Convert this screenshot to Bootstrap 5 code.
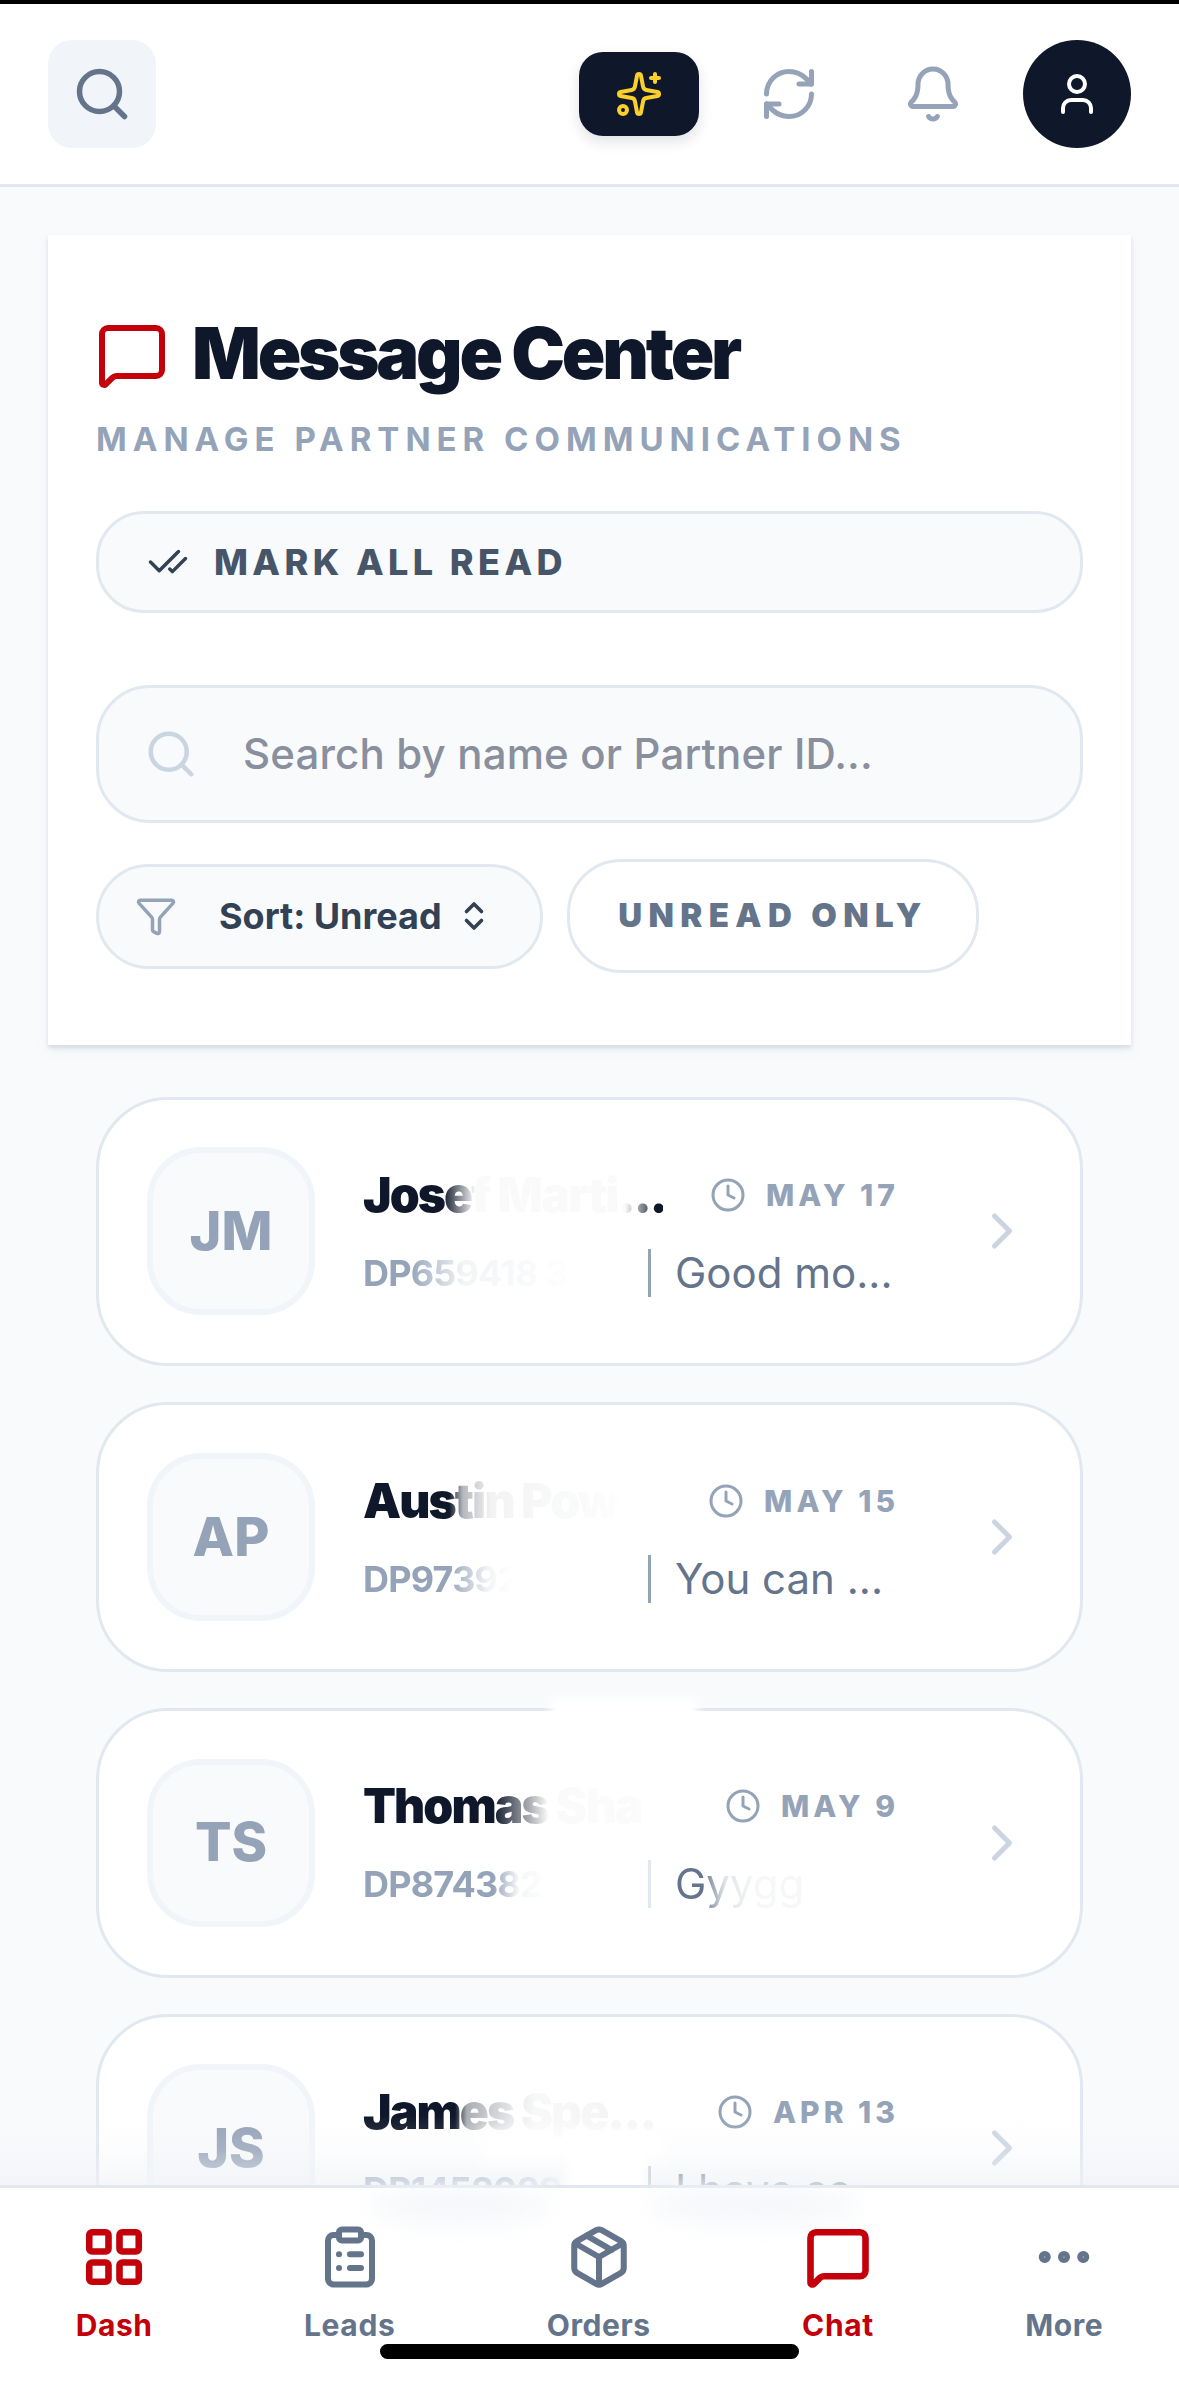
<!DOCTYPE html>
<html lang="en">
<head>
<meta charset="utf-8">
<title>Message Center</title>
<link href="https://cdn.jsdelivr.net/npm/bootstrap@5.3.0/dist/css/bootstrap.min.css" rel="stylesheet">
<style>
html,body{margin:0;height:2383px;overflow:hidden;background:#f8fafc;}
body{font-family:Inter,"Liberation Sans",sans-serif;color:#0f172a;}
.ico{fill:none;stroke:currentColor;stroke-width:2;stroke-linecap:round;stroke-linejoin:round;flex:none;display:block;}
.sw25{stroke-width:2.4;}
.sw22{stroke-width:2.2;}
.tred{color:#c4000a;}
.screen{height:2383px;border-top:4px solid #000;position:relative;}
.topbar{height:183px;background:#fff;border-bottom:3px solid #e2e8f0;padding:0 48px;flex:none;}
.tb-search{width:108px;height:108px;background:#f1f5f9;border-radius:24px;color:#64748b;border:0;padding:0;}
.tb-ai{width:120px;height:84px;background:#0f172a;border-radius:24px;color:#fcd02a;border:0;padding:0;box-shadow:0 6px 14px rgba(15,23,42,.12);}
.tb-plain{width:108px;height:108px;color:#94a3b8;border:0;padding:0;background:transparent;}
.tb-user{width:108px;height:108px;border-radius:50%;background:#0f172a;color:#fff;border:0;padding:0;}
.tb-tools{gap:36px;}
.content{flex:1 1 auto;min-height:0;overflow:hidden;position:relative;}
.panelwrap{padding:48px 48px 0;}
.panel{background:#fff;height:810px;margin:0;padding:82px 48px 0;box-shadow:0 3px 4px rgba(148,163,184,.3),0 6px 12px rgba(148,163,184,.08);}
.titleicon{margin-top:2px;}
.ptitle{font-size:72px;font-weight:900;letter-spacing:-3.2px;line-height:72px;margin:0;color:#0f172a;}
.psub{font-size:33px;font-weight:700;letter-spacing:6px;color:#94a3b8;line-height:40px;margin-top:28px;}
.markbtn{display:flex;align-items:center;gap:25px;width:100%;height:102px;margin-top:52px;padding:0 0 0 48px;background:#f8fafc;border:3px solid #e2e8f0;border-radius:48px;color:#475569;font-size:36px;font-weight:800;letter-spacing:4.4px;}
.markbtn .ico{color:#334155;}
.searchbox{height:138px;margin-top:72px;background:#f8fafc;border:3px solid #e2e8f0;border-radius:54px;padding:0 48px 0 45px;gap:45px;color:#cbd5e1;}
.searchbox input{flex:1;min-width:0;border:0;outline:0;background:transparent;font:500 42px/60px Inter,sans-serif;letter-spacing:.15px;padding:0;}
.searchbox input::placeholder{color:#898f9c;opacity:1;}
.sortpill{height:105px;width:447px;background:#f8fafc;border:3px solid #e2e8f0;border-radius:54px;padding:0 0 0 36px;color:#334155;font-size:36px;font-weight:700;}
.sortpill .fn{color:#94a3b8;margin-right:42px;}
.sortpill .ud{margin-left:14px;}
.unreadpill{height:114px;width:412px;background:#fff;border:3px solid #e2e8f0;border-radius:54px;color:#64748b;font-size:33px;font-weight:900;letter-spacing:6.4px;padding:0;}
.filters{gap:24px;margin-top:36px;}
.msgs{margin-top:51.67px;padding:0 96px;gap:36px;}
.msgcard{height:269.67px;flex:none;flex-direction:row;align-items:center;background:#fff;border:3px solid #e2e8f0;border-radius:72px;padding:0 48px;}
.avt{width:168px;height:168px;flex:none;background:#f8fafc;border:6px solid #f1f5f9;border-radius:54px;color:#94a3b8;font-size:54px;font-weight:800;margin-right:48px;padding-bottom:2px;}
.mid{width:537px;flex:none;position:relative;top:1px;}
.mname{font-size:48px;font-weight:900;letter-spacing:-1.9px;line-height:54px;color:#0f172a;white-space:nowrap;width:300px;}
.mdate{font-size:30px;font-weight:800;letter-spacing:4px;color:#94a3b8;gap:20px;line-height:36px;margin-right:1px;}
.mrow2{margin-top:27px;height:48px;}
.mid-code{width:285px;font-size:36px;font-weight:700;letter-spacing:-.8px;color:#94a3b8;line-height:48px;white-space:nowrap;overflow:hidden;flex:none;}
.mprev{border-left:3px solid #94a3b8;padding-left:24px;font-size:42px;line-height:48px;color:#64748b;white-space:nowrap;}
.mprev.dim{border-left-color:#e2e8f0;}
.chev{color:#cbd5e1;margin-left:auto;}
.m1a{-webkit-mask-image:linear-gradient(90deg,#000 80px,rgba(0,0,0,.02) 112px,rgba(0,0,0,.02) 262px,rgba(0,0,0,.6) 282px,#000 290px);mask-image:linear-gradient(90deg,#000 80px,rgba(0,0,0,.02) 112px,rgba(0,0,0,.02) 262px,rgba(0,0,0,.6) 282px,#000 290px);}
.m2a{-webkit-mask-image:linear-gradient(90deg,#000 86px,rgba(0,0,0,.3) 100px,rgba(0,0,0,.05) 128px,rgba(0,0,0,.01) 240px,transparent 260px);mask-image:linear-gradient(90deg,#000 86px,rgba(0,0,0,.3) 100px,rgba(0,0,0,.05) 128px,rgba(0,0,0,.01) 240px,transparent 260px);}
.m3a{-webkit-mask-image:linear-gradient(90deg,#000 130px,rgba(0,0,0,.02) 185px,rgba(0,0,0,.01) 300px);mask-image:linear-gradient(90deg,#000 130px,rgba(0,0,0,.02) 185px,rgba(0,0,0,.01) 300px);}
.m4a{-webkit-mask-image:linear-gradient(90deg,#000 92px,rgba(0,0,0,.35) 104px,rgba(0,0,0,.1) 150px,rgba(0,0,0,.03) 172px,rgba(0,0,0,.05) 300px);mask-image:linear-gradient(90deg,#000 92px,rgba(0,0,0,.35) 104px,rgba(0,0,0,.1) 150px,rgba(0,0,0,.03) 172px,rgba(0,0,0,.05) 300px);}
.c1a{-webkit-mask-image:linear-gradient(90deg,#000 45px,rgba(0,0,0,.12) 100px,rgba(0,0,0,.02) 200px);mask-image:linear-gradient(90deg,#000 45px,rgba(0,0,0,.12) 100px,rgba(0,0,0,.02) 200px);}
.c2a{-webkit-mask-image:linear-gradient(90deg,#000 85px,rgba(0,0,0,.12) 125px,transparent 150px);mask-image:linear-gradient(90deg,#000 85px,rgba(0,0,0,.12) 125px,transparent 150px);}
.c3a{-webkit-mask-image:linear-gradient(90deg,#000 130px,rgba(0,0,0,.1) 155px,transparent 190px);mask-image:linear-gradient(90deg,#000 130px,rgba(0,0,0,.1) 155px,transparent 190px);}
.c4a{-webkit-mask-image:linear-gradient(90deg,#000 130px,rgba(0,0,0,.2) 190px,transparent 210px);mask-image:linear-gradient(90deg,#000 130px,rgba(0,0,0,.2) 190px,transparent 210px);}
.p3a{-webkit-mask-image:linear-gradient(90deg,#000 27px,rgba(0,0,0,.2) 50px,rgba(0,0,0,.06) 80px);mask-image:linear-gradient(90deg,#000 27px,rgba(0,0,0,.2) 50px,rgba(0,0,0,.06) 80px);}
.wipe{position:absolute;background:#fff;pointer-events:none;}
.wipe-a{left:550px;top:1510px;width:148px;height:24px;filter:blur(5px);}
.wipe-b{left:0;right:0;bottom:0;height:70px;background:linear-gradient(rgba(240,242,246,0),rgba(240,242,246,.2) 50%,rgba(240,242,246,.65));}
.wipe-c{left:478px;bottom:24px;width:190px;height:30px;filter:blur(10px);}
.wipe-d{left:566px;bottom:-10px;width:80px;height:50px;filter:blur(6px);}
.bottomnav{height:198px;flex:none;background:#fff;border-top:3px solid #e2e8f0;position:relative;padding-top:36px;}
.navblob{position:absolute;top:0;height:36px;background:#f5f7fa;border-radius:50%;filter:blur(12px);}
.nb1{left:370px;width:180px;}
.nb2{left:650px;width:210px;}
.navitem{display:flex;flex-direction:column;align-items:center;color:#64748b;font-size:30px;font-weight:700;letter-spacing:.6px;line-height:36px;text-decoration:none;position:relative;}
.navitem span{margin-top:17px;}
.navitem.on{color:#c4000a;}
.homebar{position:absolute;left:380px;top:2340px;width:419px;height:15px;background:#000;border-radius:8px;}
</style>
</head>
<body>
<div class="screen d-flex flex-column">
  <header class="topbar d-flex align-items-center justify-content-between">
    <button class="tb-search btn d-flex align-items-center justify-content-center" aria-label="Search">
      <svg class="ico sw22" width="60" height="60" viewBox="0 0 24 24"><circle cx="11" cy="11" r="8"/><path d="m21 21-4.3-4.3"/></svg>
    </button>
    <div class="tb-tools d-flex align-items-center">
      <button class="tb-ai btn d-flex align-items-center justify-content-center" aria-label="AI">
        <svg class="ico" width="48" height="48" viewBox="0 0 24 24"><path d="M11.017 2.814a1 1 0 0 1 1.966 0l1.051 5.558a2 2 0 0 0 1.594 1.594l5.558 1.051a1 1 0 0 1 0 1.966l-5.558 1.051a2 2 0 0 0-1.594 1.594l-1.051 5.558a1 1 0 0 1-1.966 0l-1.051-5.558a2 2 0 0 0-1.594-1.594l-5.558-1.051a1 1 0 0 1 0-1.966l5.558-1.051a2 2 0 0 0 1.594-1.594z"/><path d="M20 2v4"/><path d="M22 4h-4"/><circle cx="4" cy="20" r="2"/></svg>
      </button>
      <button class="tb-plain btn d-flex align-items-center justify-content-center" aria-label="Refresh">
        <svg class="ico" width="60" height="60" viewBox="0 0 24 24"><path d="M3 12a9 9 0 0 1 9-9 9.75 9.75 0 0 1 6.74 2.74L21 8"/><path d="M21 3v5h-5"/><path d="M21 12a9 9 0 0 1-9 9 9.75 9.75 0 0 1-6.74-2.74L3 16"/><path d="M8 16H3v5"/></svg>
      </button>
      <button class="tb-plain btn d-flex align-items-center justify-content-center" aria-label="Alerts">
        <svg class="ico" width="60" height="60" viewBox="0 0 24 24"><path d="M10.268 21a2 2 0 0 0 3.464 0"/><path d="M3.262 15.326A1 1 0 0 0 4 17h16a1 1 0 0 0 .74-1.673C19.41 13.956 18 12.499 18 8A6 6 0 0 0 6 8c0 4.499-1.411 5.956-2.738 7.326"/></svg>
      </button>
      <button class="tb-user btn d-flex align-items-center justify-content-center" aria-label="Profile">
        <svg class="ico" width="48" height="48" viewBox="0 0 24 24"><path d="M19 21v-2a4 4 0 0 0-4-4H9a4 4 0 0 0-4 4v2"/><circle cx="12" cy="7" r="4"/></svg>
      </button>
    </div>
  </header>

  <main class="content">
    <div class="panelwrap">
      <section class="panel">
        <div class="d-flex align-items-start gap-4">
          <svg class="ico tred titleicon" width="72" height="72" viewBox="0 0 24 24"><path d="M22 17a2 2 0 0 1-2 2H6.828a2 2 0 0 0-1.414.586l-2.202 2.202A.71.71 0 0 1 2 21.286V5a2 2 0 0 1 2-2h16a2 2 0 0 1 2 2z"/></svg>
          <h1 class="ptitle">Message Center</h1>
        </div>
        <div class="psub">MANAGE PARTNER COMMUNICATIONS</div>
        <button class="markbtn btn">
          <svg class="ico" width="42" height="42" viewBox="0 0 24 24"><path d="M18 6 7 17l-5-5"/><path d="m22 10-7.5 7.5L13 16"/></svg>
          MARK ALL READ
        </button>
        <div class="searchbox d-flex align-items-center">
          <svg class="ico" width="54" height="54" viewBox="0 0 24 24"><circle cx="11" cy="11" r="8"/><path d="m21 21-4.3-4.3"/></svg>
          <input type="text" placeholder="Search by name or Partner ID..." aria-label="Search">
        </div>
        <div class="filters d-flex align-items-center">
          <button class="sortpill btn d-flex align-items-center">
            <svg class="ico fn" width="42" height="42" viewBox="0 0 24 24"><path d="M10 20a1 1 0 0 0 .553.895l2 1A1 1 0 0 0 14 21v-7a2 2 0 0 1 .517-1.341L21.74 4.67A1 1 0 0 0 21 3H3a1 1 0 0 0-.742 1.67l7.225 7.989A2 2 0 0 1 10 14z"/></svg>
            Sort: Unread
            <svg class="ico sw25 ud" width="36" height="36" viewBox="0 0 24 24"><path d="m7 15 5 5 5-5"/><path d="m7 9 5-5 5 5"/></svg>
          </button>
          <button class="unreadpill btn">UNREAD ONLY</button>
        </div>
      </section>
    </div>

    <div class="msgs d-flex flex-column">
      <article class="msgcard card">
        <div class="avt d-flex align-items-center justify-content-center">JM</div>
        <div class="mid">
          <div class="d-flex align-items-center justify-content-between">
            <div class="mname m1a">Josef Marti...</div>
            <div class="mdate d-flex align-items-center">
              <svg class="ico" width="36" height="36" viewBox="0 0 24 24"><circle cx="12" cy="12" r="10"/><path d="M12 6v6l4 2"/></svg>MAY 17
            </div>
          </div>
          <div class="mrow2 d-flex">
            <div class="mid-code c1a">DP659418 3</div>
            <div class="mprev">Good mo...</div>
          </div>
        </div>
        <svg class="ico chev" width="60" height="60" viewBox="0 0 24 24"><path d="m9 18 6-6-6-6"/></svg>
      </article>

      <article class="msgcard card">
        <div class="avt d-flex align-items-center justify-content-center">AP</div>
        <div class="mid">
          <div class="d-flex align-items-center justify-content-between">
            <div class="mname m2a">Austin Pow</div>
            <div class="mdate d-flex align-items-center">
              <svg class="ico" width="36" height="36" viewBox="0 0 24 24"><circle cx="12" cy="12" r="10"/><path d="M12 6v6l4 2"/></svg>MAY 15
            </div>
          </div>
          <div class="mrow2 d-flex">
            <div class="mid-code c2a">DP973921</div>
            <div class="mprev">You can ...</div>
          </div>
        </div>
        <svg class="ico chev" width="60" height="60" viewBox="0 0 24 24"><path d="m9 18 6-6-6-6"/></svg>
      </article>

      <article class="msgcard card">
        <div class="avt d-flex align-items-center justify-content-center">TS</div>
        <div class="mid">
          <div class="d-flex align-items-center justify-content-between">
            <div class="mname m3a">Thomas Sha</div>
            <div class="mdate d-flex align-items-center">
              <svg class="ico" width="36" height="36" viewBox="0 0 24 24"><circle cx="12" cy="12" r="10"/><path d="M12 6v6l4 2"/></svg>MAY 9
            </div>
          </div>
          <div class="mrow2 d-flex">
            <div class="mid-code c3a">DP874382</div>
            <div class="mprev dim"><span class="d-block p3a">Gyygg</span></div>
          </div>
        </div>
        <svg class="ico chev" width="60" height="60" viewBox="0 0 24 24"><path d="m9 18 6-6-6-6"/></svg>
      </article>

      <article class="msgcard card">
        <div class="avt d-flex align-items-center justify-content-center">JS</div>
        <div class="mid">
          <div class="d-flex align-items-center justify-content-between">
            <div class="mname m4a">James Spe...</div>
            <div class="mdate d-flex align-items-center">
              <svg class="ico" width="36" height="36" viewBox="0 0 24 24"><circle cx="12" cy="12" r="10"/><path d="M12 6v6l4 2"/></svg>APR 13
            </div>
          </div>
          <div class="mrow2 d-flex">
            <div class="mid-code c4a">DP1452089</div>
            <div class="mprev">I have se...</div>
          </div>
        </div>
        <svg class="ico chev" width="60" height="60" viewBox="0 0 24 24"><path d="m9 18 6-6-6-6"/></svg>
      </article>
    </div>

    <div class="wipe wipe-a"></div>
    <div class="wipe wipe-b"></div>
    <div class="wipe wipe-c"></div>
    <div class="wipe wipe-d"></div>
  </main>

  <nav class="bottomnav nav justify-content-around align-items-start">
    <div class="navblob nb1"></div>
    <div class="navblob nb2"></div>
    <a class="navitem on" href="#">
      <svg class="ico sw25" width="66" height="66" viewBox="0 0 24 24"><rect x="3" y="3" width="7" height="7" rx="1"/><rect x="14" y="3" width="7" height="7" rx="1"/><rect x="14" y="14" width="7" height="7" rx="1"/><rect x="3" y="14" width="7" height="7" rx="1"/></svg>
      <span>Dash</span>
    </a>
    <a class="navitem" href="#">
      <svg class="ico sw22" width="66" height="66" viewBox="0 0 24 24"><rect x="8" y="2" width="8" height="4" rx="1"/><path d="M16 4h2a2 2 0 0 1 2 2v14a2 2 0 0 1-2 2H6a2 2 0 0 1-2-2V6a2 2 0 0 1 2-2h2"/><path d="M12 11h4"/><path d="M12 16h4"/><path d="M8 11h.01"/><path d="M8 16h.01"/></svg>
      <span>Leads</span>
    </a>
    <a class="navitem" href="#">
      <svg class="ico sw22" width="66" height="66" viewBox="0 0 24 24"><path d="M11 21.73a2 2 0 0 0 2 0l7-4A2 2 0 0 0 21 16V8a2 2 0 0 0-1-1.73l-7-4a2 2 0 0 0-2 0l-7 4A2 2 0 0 0 3 8v8a2 2 0 0 0 1 1.73z"/><path d="M12 22V12"/><polyline points="3.29 7 12 12 20.71 7"/><path d="m7.5 4.27 9 5.15"/></svg>
      <span>Orders</span>
    </a>
    <a class="navitem on" href="#">
      <svg class="ico sw25" width="66" height="66" viewBox="0 0 24 24"><path d="M22 17a2 2 0 0 1-2 2H6.828a2 2 0 0 0-1.414.586l-2.202 2.202A.71.71 0 0 1 2 21.286V5a2 2 0 0 1 2-2h16a2 2 0 0 1 2 2z"/></svg>
      <span>Chat</span>
    </a>
    <a class="navitem" href="#">
      <svg class="ico sw25" width="66" height="66" viewBox="0 0 24 24"><circle cx="5" cy="12" r="1"/><circle cx="12" cy="12" r="1"/><circle cx="19" cy="12" r="1"/></svg>
      <span>More</span>
    </a>
  </nav>
  <div class="homebar"></div>
</div>
</body>
</html>
